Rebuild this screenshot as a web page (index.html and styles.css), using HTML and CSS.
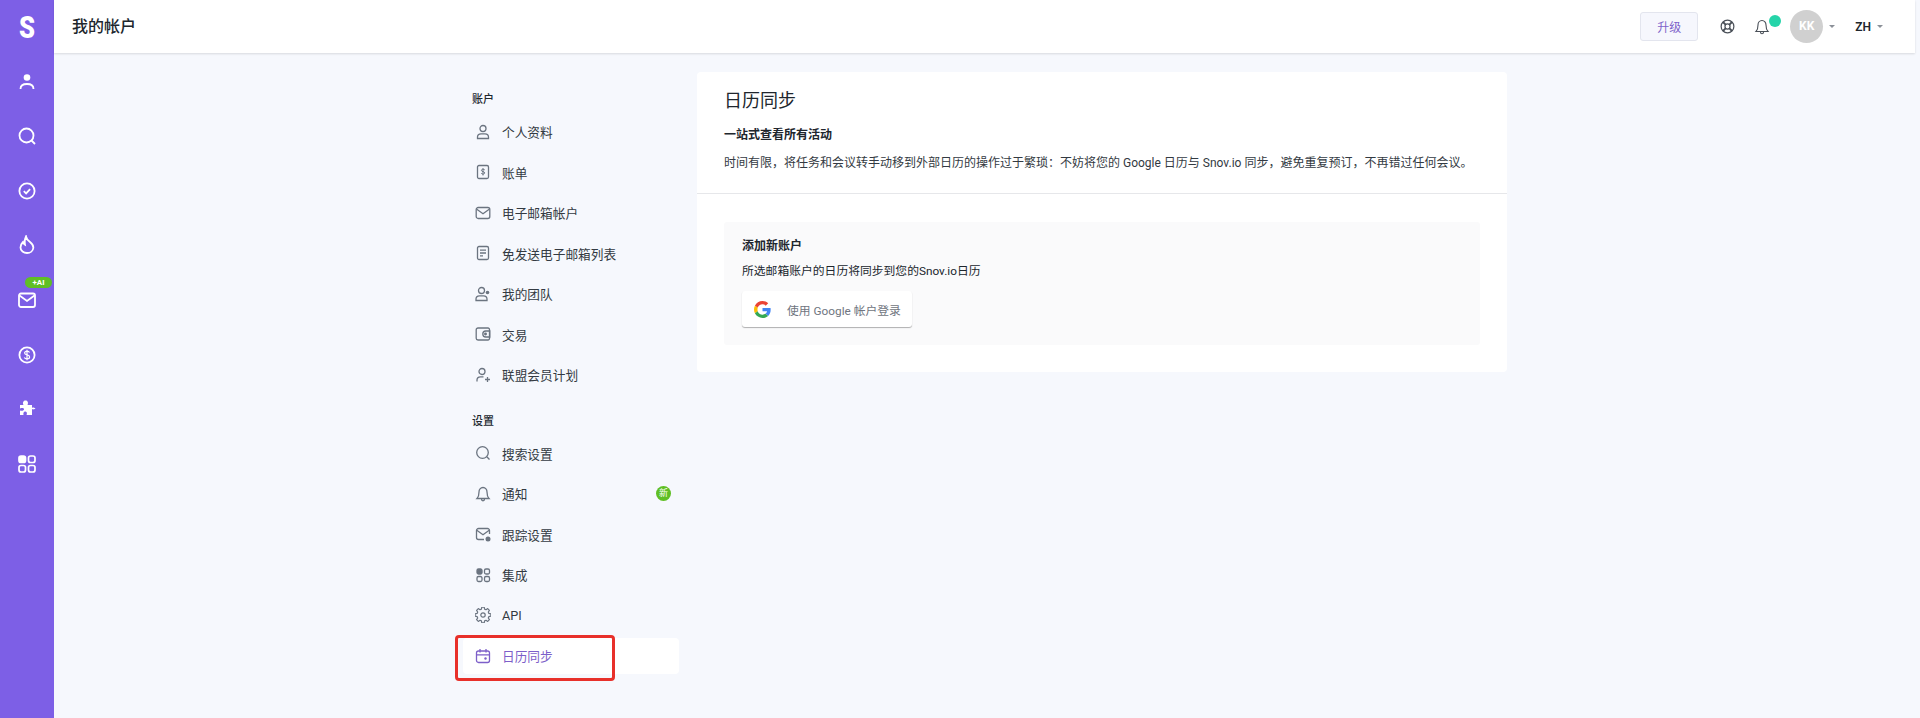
FILE: index.html
```html
<!DOCTYPE html>
<html lang="zh">
<head>
    <meta charset="UTF-8">
    <title>我的帐户</title>
    <link rel="stylesheet" href="styles.css">
</head>
<body>

<!-- Barra lateral -->
<aside class="rail">
    <div class="rail-logo">S</div>
    <svg class="rail-icon" viewBox="0 0 20 20"><circle cx="10" cy="5.500" r="3.300" fill="currentColor"/><path d="M3.500 17c0-3.300 2.800-5 6.500-5s6.500 1.700 6.500 5" fill="none" stroke="currentColor" stroke-width="1.800"/></svg>
    <svg class="rail-icon" viewBox="0 0 20 20" fill="none" stroke="currentColor" stroke-width="1.800"><circle cx="9.500" cy="9.500" r="7"/><path d="M14.500 14.500l3.500 3.500"/></svg>
    <svg class="rail-icon" viewBox="0 0 20 20" fill="none" stroke="currentColor" stroke-width="1.800"><circle cx="10" cy="10" r="7.600"/><path d="M6.800 10.200l2.300 2.200 4-4.200"/></svg>
    <svg class="rail-icon" viewBox="0 0 20 20" fill="none" stroke="currentColor" stroke-width="1.800"><path d="M9 1.500c.5 3 2 4 4 5.500 2.500 2 3.500 4 3.300 6-.3 3-3 5-6.300 5s-6.500-2-6.500-5.500c0-2.500 1.300-4.300 2.500-5.500.3 1.500 1 2.300 2 2.800C7.500 7 7.800 4 9 1.500z"/></svg>
    <div class="rail-mail">
        <svg class="rail-icon" viewBox="0 0 20 20" fill="none" stroke="currentColor" stroke-width="1.800"><rect x="2" y="3.500" width="16" height="13.500" rx="2"/><path d="M2.500 5.500l7.500 5.500 7.500-5.500"/></svg>
        <span class="ai-badge">+AI</span>
    </div>
    <svg class="rail-icon" viewBox="0 0 20 20" fill="none" stroke="currentColor" stroke-width="1.800"><circle cx="10" cy="10" r="7.600"/><path d="M12.500 7.500c-.5-1-1.400-1.300-2.500-1.300-1.300 0-2.400.6-2.400 1.800 0 2.600 5 1.300 5 3.900 0 1.200-1.200 1.900-2.600 1.900-1.200 0-2.200-.4-2.700-1.400M10 4.800v10.400" stroke-width="1.200"/></svg>
    <svg class="rail-icon" viewBox="0 0 20 20" fill="currentColor"><path d="M3 6h3.500C5.500 4 6 1.500 8.500 1.500S11.500 4 10.500 6H15v3c1-.6 1.500-.6 3.500.5-2 1.100-2.500 1.100-3.500.5v6H9.500c.7-1.500.7-3-1-3.500-1.500-.4-2.500 1-2 3.500H3v-4.500c2 .7 4 .2 4-1.200S5 8.800 3 9.500z"/></svg>
    <svg class="rail-icon" viewBox="0 0 20 20" fill="none" stroke="currentColor" stroke-width="1.700"><rect x="2" y="2" width="6.500" height="6.500" rx="2" fill="currentColor"/><rect x="11.500" y="2" width="6.500" height="6.500" rx="2"/><rect x="2" y="11.500" width="6.500" height="6.500" rx="2"/><rect x="11.500" y="11.500" width="6.500" height="6.500" rx="2"/></svg>
</aside>

<div class="main">
    <!-- Cabecera -->
    <header class="topbar">
        <h1>我的帐户</h1>
        <div class="topbar-right">
            <button class="btn-upgrade">升级</button>
            <svg class="help-icon" viewBox="0 0 16 16" fill="none" stroke="#4a5058" stroke-width="1.300"><circle cx="8" cy="8" r="6.800"/><circle cx="8" cy="8" r="2.700"/><path d="M3.200 3.200l3 3M12.800 3.200l-3 3M3.200 12.800l3-3M12.800 12.800l-3-3" stroke-width="2"/></svg>
            <div class="bell">
                <svg viewBox="0 0 16 16" fill="none" stroke="#4a5058" stroke-width="1.100"><path d="M8 1.500c-2.500 0-4 2-4 4.500 0 3-.5 5-2 6.500h12c-1.500-1.500-2-3.500-2-6.500 0-2.500-1.500-4.500-4-4.500zM6.500 13c0 1 .7 1.800 1.500 1.800s1.500-.8 1.500-1.800"/></svg>
                <span class="bell-dot"></span>
            </div>
            <div class="avatar">KK</div>
            <span class="caret"></span>
            <span class="lang">ZH</span>
            <span class="caret"></span>
        </div>
    </header>

    <div class="page">
        <!-- Menú de ajustes -->
        <nav class="menu">
            <div class="menu-title">账户</div>
            <a class="menu-item">
                <svg viewBox="0 0 16 16" fill="none" stroke="currentColor" stroke-width="1.300"><circle cx="8" cy="4.500" r="3"/><path d="M2.500 14.500v-1.500c0-2 1.500-3.200 3.500-3.200h4c2 0 3.500 1.200 3.500 3.200v1.500z"/></svg>
                个人资料
            </a>
            <a class="menu-item">
                <svg viewBox="0 0 16 16" fill="none" stroke="currentColor" stroke-width="1.300"><rect x="2.500" y="1.500" width="11" height="13" rx="1.500"/><path d="M9.800 6c-.4-.6-1-.8-1.800-.8-.9 0-1.600.4-1.600 1.200 0 1.600 3.300.8 3.300 2.500 0 .8-.8 1.200-1.700 1.200-.8 0-1.400-.3-1.800-.9M8 4.200v7.300" stroke-width="1"/></svg>
                账单
            </a>
            <a class="menu-item">
                <svg viewBox="0 0 16 16" fill="none" stroke="currentColor" stroke-width="1.300"><rect x="1.200" y="2.500" width="13.600" height="11" rx="2"/><path d="M1.800 4.300L8 8.800l6.200-4.500"/></svg>
                电子邮箱帐户
            </a>
            <a class="menu-item">
                <svg viewBox="0 0 16 16" fill="none" stroke="currentColor" stroke-width="1.300"><rect x="2.500" y="1.500" width="11" height="13" rx="1.500"/><path d="M5 5.200h6M5 8h6M5 10.800h3"/></svg>
                免发送电子邮箱列表
            </a>
            <a class="menu-item">
                <svg viewBox="0 0 16 16" fill="none" stroke="currentColor" stroke-width="1.300"><circle cx="6.500" cy="4.500" r="3"/><path d="M1 14.500v-1.500c0-2 1.500-3.200 3.500-3.200h4c2 0 3.500 1.200 3.500 3.200v1.500z"/><circle cx="12.500" cy="6.500" r="1.800" fill="currentColor" stroke="none"/></svg>
                我的团队
            </a>
            <a class="menu-item">
                <svg viewBox="0 0 16 16" fill="none" stroke="currentColor" stroke-width="1.300"><path d="M14.500 4V3.500A1.500 1.500 0 0 0 13 2H3A1.800 1.800 0 0 0 1.200 3.800v8.400A1.800 1.800 0 0 0 3 14h10a1.500 1.500 0 0 0 1.500-1.500V4z"/><path d="M14.800 5h-4a3 3 0 0 0 0 6h4z"/><circle cx="10.500" cy="8" r=".8" fill="currentColor"/></svg>
                交易
            </a>
            <a class="menu-item">
                <svg viewBox="0 0 16 16" fill="none" stroke="currentColor" stroke-width="1.300"><circle cx="7" cy="4.500" r="3"/><path d="M2 14.500v-1.500c0-2 1.500-3.200 3.500-3.200h3M12.500 10v5M10 12.500h5"/></svg>
                联盟会员计划
            </a>

            <div class="menu-title second">设置</div>
            <a class="menu-item">
                <svg viewBox="0 0 16 16" fill="none" stroke="currentColor" stroke-width="1.300"><circle cx="7.500" cy="7.500" r="5.800"/><path d="M11.800 11.800l2.700 2.700"/></svg>
                搜索设置
            </a>
            <a class="menu-item">
                <svg viewBox="0 0 16 16" fill="none" stroke="currentColor" stroke-width="1.300"><path d="M8 1.500c-2.500 0-4 2-4 4.500 0 3-.5 5-2 6.500h12c-1.500-1.500-2-3.500-2-6.500 0-2.500-1.500-4.500-4-4.500zM6.500 13c0 1 .7 1.800 1.500 1.800s1.500-.8 1.500-1.800"/></svg>
                通知
                <span class="new-badge">新</span>
            </a>
            <a class="menu-item">
                <svg viewBox="0 0 16 16" fill="none" stroke="currentColor" stroke-width="1.300"><path d="M14.500 8V4.500a2 2 0 0 0-2-2h-9a2 2 0 0 0-2 2v7a2 2 0 0 0 2 2H9"/><path d="M1.800 4.300L8 8.800l6.200-4.500"/><circle cx="13" cy="13" r="2.500" fill="currentColor" stroke="none"/></svg>
                跟踪设置
            </a>
            <a class="menu-item">
                <svg viewBox="0 0 16 16" fill="none" stroke="currentColor" stroke-width="1.300"><rect x="2" y="2" width="5" height="5" rx="1.500" fill="currentColor"/><rect x="9.500" y="2" width="5" height="5" rx="1.500"/><rect x="2" y="9.500" width="5" height="5" rx="1.500"/><rect x="9.500" y="9.500" width="5" height="5" rx="1.500"/></svg>
                集成
            </a>
            <a class="menu-item">
                <svg viewBox="0 0 16 16" fill="none" stroke="currentColor" stroke-width="1.200"><circle cx="8" cy="8" r="2.200"/><path d="M6.800.1h2.400l.4 2 1.400.6 1.700-1.100 1.700 1.700-1.100 1.700.6 1.400 2 .4v2.400l-2 .4-.6 1.400 1.100 1.700-1.700 1.700-1.700-1.100-1.400.6-.4 2H6.800l-.4-2-1.400-.6-1.700 1.100-1.700-1.700 1.100-1.700-.6-1.400-2-.4V6.800l2-.4.6-1.400-1.100-1.700 1.700-1.700L5 2.700l1.400-.6z" stroke-linejoin="round"/></svg>
                API
            </a>
            <a class="menu-item active">
                <svg viewBox="0 0 16 16" fill="none" stroke="currentColor" stroke-width="1.300"><rect x="1.500" y="3" width="13" height="11.500" rx="2"/><path d="M1.500 6.800h13M5 1v3.500M11 1v3.500"/><circle cx="10.500" cy="10.500" r="1.200" fill="currentColor" stroke="none"/></svg>
                日历同步
            </a>
            <!-- Marca roja de la captura -->
            <div class="red-mark"></div>
        </nav>

        <!-- Contenido -->
        <section class="card">
            <div class="card-head">
                <h2>日历同步</h2>
                <h3>一站式查看所有活动</h3>
                <p>时间有限，将任务和会议转手动移到外部日历的操作过于繁琐：不妨将您的 Google 日历与 Snov.io 同步，避免重复预订，不再错过任何会议。</p>
            </div>
            <div class="card-body">
                <div class="add-box">
                    <h4>添加新账户</h4>
                    <p>所选邮箱账户的日历将同步到您的Snov.io日历</p>
                    <button class="btn-google">
                        <svg viewBox="0 0 48 48" width="17" height="17"><path fill="#EA4335" d="M24 9.500c3.500 0 6.700 1.200 9.200 3.600l6.900-6.900C35.900 2.400 30.400 0 24 0 14.600 0 6.500 5.400 2.600 13.200l8 6.200C12.400 13.700 17.700 9.500 24 9.500z"/><path fill="#4285F4" d="M47 24.500c0-1.600-.1-3.100-.4-4.500H24v9h12.900c-.6 3-2.200 5.500-4.700 7.200l7.700 6c4.500-4.200 7.100-10.300 7.100-17.700z"/><path fill="#FBBC05" d="M10.600 28.600c-.5-1.400-.8-3-.8-4.600s.3-3.200.8-4.600l-8-6.200C.9 16.500 0 20.100 0 24s.9 7.500 2.600 10.800z"/><path fill="#34A853" d="M24 48c6.500 0 11.900-2.100 15.900-5.800l-7.700-6c-2.200 1.400-4.900 2.300-8.200 2.300-6.300 0-11.600-4.200-13.400-9.900l-8 6.200C6.500 42.600 14.600 48 24 48z"/></svg>
                        <span>使用 Google 帐户登录</span>
                    </button>
                </div>
            </div>
        </section>
    </div>
</div>

</body>
</html>
```

FILE: styles.css
```css
/* Estilos principales */
* {
    box-sizing: border-box;
}
html, body {
    height: 100%;
}
body {
    margin: 0;
    display: flex;
    overflow: hidden;
    background: #f6f8fd;
    color: #20262d;
    font-family: Roboto, "Noto Sans CJK SC", sans-serif;
    font-size: 13px;
}
h1, h2, h3, h4, p {
    margin: 0;
}

/* Barra lateral */
.rail {
    width: 54px;
    flex: none;
    background: #7d5fe6;
    color: #fff;
    display: flex;
    flex-direction: column;
    align-items: center;
    gap: 34.600px;
}
.rail-logo {
    height: 46px;
    margin-bottom: -9px;
    font-size: 32px;
    font-weight: 900;
    line-height: 54px;
    transform: scaleX(0.8);
}
.rail-icon {
    display: block;
    width: 20px;
    height: 20px;
}
.rail-mail {
    position: relative;
}
.ai-badge {
    position: absolute;
    top: -13px;
    left: 8px;
    width: 27px;
    height: 11px;
    border-radius: 6px;
    background: #5fbf24;
    font-size: 8px;
    font-weight: 700;
    line-height: 11px;
    text-align: center;
}

/* Cabecera */
.main {
    flex: 1;
    min-width: 0;
    display: flex;
    flex-direction: column;
}
.topbar {
    height: 53px;
    flex: none;
    margin-right: 5px;
    padding: 0 32px 0 18px;
    background: #fff;
    box-shadow: 0 1px 2px rgba(0, 0, 0, 0.12);
    display: flex;
    align-items: center;
    justify-content: space-between;
}
.topbar h1 {
    margin-bottom: 3px;
    font-size: 16px;
    font-weight: 500;
}
.topbar-right {
    display: flex;
    align-items: center;
}
.btn-upgrade {
    width: 58px;
    height: 29px;
    margin-right: 22px;
    padding: 0;
    border: 1px solid #e3e5ee;
    border-radius: 3px;
    background: #f6f7fd;
    color: #7d62c9;
    font-family: inherit;
    font-size: 12px;
}
.help-icon {
    width: 15px;
    height: 15px;
    margin-right: 19px;
}
.bell {
    position: relative;
    width: 16px;
    height: 16px;
    margin-right: 20px;
}
.bell svg {
    display: block;
    width: 16px;
    height: 16px;
}
.bell-dot {
    position: absolute;
    top: -4px;
    left: 15px;
    width: 12px;
    height: 12px;
    border-radius: 50%;
    background: #25d4a9;
}
.avatar {
    width: 33px;
    height: 33px;
    border-radius: 50%;
    background: #d0d0d0;
    color: #fff;
    font-size: 12px;
    font-weight: 700;
    line-height: 33px;
    text-align: center;
}
.caret {
    width: 0;
    height: 0;
    margin-left: 6px;
    border: 3.500px solid transparent;
    border-top: 3.500px solid #8b9098;
    border-bottom: 0;
}
.avatar + .caret {
    margin-right: 20px;
}
.lang {
    font-size: 12px;
    font-weight: 600;
}

/* Menú */
.page {
    flex: 1;
    display: flex;
    justify-content: center;
    align-items: flex-start;
    gap: 18px;
    padding: 19px 4px 0 0;
}
.menu {
    position: relative;
    width: 216px;
    padding-top: 19px;
}
.menu-title {
    height: 18px;
    padding-left: 9px;
    font-size: 11px;
    font-weight: 500;
    line-height: 18px;
}
.menu-title.second {
    margin-top: 20px;
}
.menu-item {
    height: 36px;
    margin: 4.500px 0;
    padding-left: 12px;
    border-radius: 4px;
    display: flex;
    align-items: center;
    gap: 11px;
    color: #333a42;
    font-size: 12.700px;
}
.menu-item svg {
    width: 16px;
    height: 16px;
    flex: none;
    color: #6b7480;
}
.menu-item.active {
    background: #fff;
    color: #7d5fc9;
}
.menu-item.active svg {
    color: #7d5fc9;
}
.new-badge {
    margin-left: auto;
    margin-right: 8px;
    width: 15px;
    height: 15px;
    border-radius: 50%;
    background: #5fbf24;
    color: #fff;
    font-size: 9px;
    line-height: 15px;
    text-align: center;
}
.red-mark {
    position: absolute;
    left: -8px;
    bottom: -3px;
    width: 160px;
    height: 46px;
    border: 3px solid #e8302a;
    border-radius: 4px;
}

/* Tarjeta */
.card {
    width: 810px;
    height: 300px;
    border-radius: 4px;
    background: #fff;
}
.card-head {
    height: 122px;
    padding: 16px 27px 0;
    border-bottom: 1px solid #e6e7ea;
}
.card-head h2 {
    font-size: 18px;
    font-weight: 400;
    line-height: 25px;
    margin-bottom: 13px;
}
.card-head h3 {
    font-size: 12px;
    font-weight: 600;
    line-height: 18px;
    margin-bottom: 10px;
}
.card-head p {
    font-size: 12px;
    line-height: 18px;
    color: #333a42;
}
.card-body {
    padding: 28px 27px 0;
}
.add-box {
    height: 123px;
    padding: 15px 18px;
    background: #fafafb;
    border-radius: 3px;
}
.add-box h4 {
    font-size: 12px;
    font-weight: 600;
    line-height: 18px;
    margin-bottom: 7px;
}
.add-box p {
    font-size: 11.800px;
    line-height: 18px;
    margin-bottom: 11px;
}
.btn-google {
    width: 170px;
    height: 36px;
    padding: 0 0 0 12px;
    border: none;
    border-radius: 3px;
    background: #fff;
    box-shadow: 0 1px 1px rgba(0, 0, 0, 0.3);
    color: #6f7580;
    font-family: inherit;
    font-size: 11.800px;
    display: flex;
    align-items: center;
    gap: 16px;
}
```
